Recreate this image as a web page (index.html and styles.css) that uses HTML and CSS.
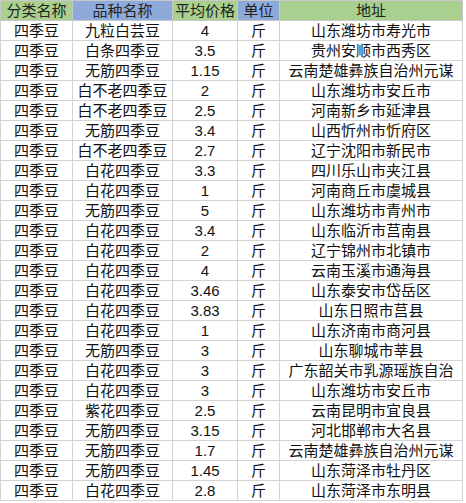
FILE: index.html
```html
<!DOCTYPE html>
<html>
<head>
<meta charset="utf-8">
<link rel="stylesheet" href="styles.css">
</head>
<body>
<table class="sheet">
<colgroup>
<col class="c1"><col class="c2"><col class="c3"><col class="c4"><col class="c5">
</colgroup>
<thead>
<tr><th class="g">分类名称</th><th class="b">品种名称</th><th class="g">平均价格</th><th class="b">单位</th><th class="g">地址</th></tr>
</thead>
<tbody>
<tr><td>四季豆</td><td>九粒白芸豆</td><td class="n">4</td><td>斤</td><td>山东潍坊市寿光市</td></tr>
<tr><td>四季豆</td><td>白条四季豆</td><td class="n">3.5</td><td>斤</td><td>贵州安顺市西秀区</td></tr>
<tr><td>四季豆</td><td>无筋四季豆</td><td class="n">1.15</td><td>斤</td><td>云南楚雄彝族自治州元谋</td></tr>
<tr><td>四季豆</td><td>白不老四季豆</td><td class="n">2</td><td>斤</td><td>山东潍坊市安丘市</td></tr>
<tr><td>四季豆</td><td>白不老四季豆</td><td class="n">2.5</td><td>斤</td><td>河南新乡市延津县</td></tr>
<tr><td>四季豆</td><td>无筋四季豆</td><td class="n">3.4</td><td>斤</td><td>山西忻州市忻府区</td></tr>
<tr><td>四季豆</td><td>白不老四季豆</td><td class="n">2.7</td><td>斤</td><td>辽宁沈阳市新民市</td></tr>
<tr><td>四季豆</td><td>白花四季豆</td><td class="n">3.3</td><td>斤</td><td>四川乐山市夹江县</td></tr>
<tr><td>四季豆</td><td>白花四季豆</td><td class="n">1</td><td>斤</td><td>河南商丘市虞城县</td></tr>
<tr><td>四季豆</td><td>无筋四季豆</td><td class="n">5</td><td>斤</td><td>山东潍坊市青州市</td></tr>
<tr><td>四季豆</td><td>白花四季豆</td><td class="n">3.4</td><td>斤</td><td>山东临沂市莒南县</td></tr>
<tr><td>四季豆</td><td>白花四季豆</td><td class="n">2</td><td>斤</td><td>辽宁锦州市北镇市</td></tr>
<tr><td>四季豆</td><td>白花四季豆</td><td class="n">4</td><td>斤</td><td>云南玉溪市通海县</td></tr>
<tr><td>四季豆</td><td>白花四季豆</td><td class="n">3.46</td><td>斤</td><td>山东泰安市岱岳区</td></tr>
<tr><td>四季豆</td><td>白花四季豆</td><td class="n">3.83</td><td>斤</td><td>山东日照市莒县</td></tr>
<tr><td>四季豆</td><td>白花四季豆</td><td class="n">1</td><td>斤</td><td>山东济南市商河县</td></tr>
<tr><td>四季豆</td><td>无筋四季豆</td><td class="n">3</td><td>斤</td><td>山东聊城市莘县</td></tr>
<tr><td>四季豆</td><td>白花四季豆</td><td class="n">3</td><td>斤</td><td>广东韶关市乳源瑶族自治</td></tr>
<tr><td>四季豆</td><td>白花四季豆</td><td class="n">3</td><td>斤</td><td>山东潍坊市安丘市</td></tr>
<tr><td>四季豆</td><td>紫花四季豆</td><td class="n">2.5</td><td>斤</td><td>云南昆明市宜良县</td></tr>
<tr><td>四季豆</td><td>无筋四季豆</td><td class="n">3.15</td><td>斤</td><td>河北邯郸市大名县</td></tr>
<tr><td>四季豆</td><td>无筋四季豆</td><td class="n">1.7</td><td>斤</td><td>云南楚雄彝族自治州元谋</td></tr>
<tr><td>四季豆</td><td>无筋四季豆</td><td class="n">1.45</td><td>斤</td><td>山东菏泽市牡丹区</td></tr>
<tr><td>四季豆</td><td>白花四季豆</td><td class="n">2.8</td><td>斤</td><td>山东菏泽市东明县</td></tr>
</tbody>
</table>
</body>
</html>
```

FILE: styles.css
```css
html, body {
  margin: 0;
  padding: 0;
  background: #ffffff;
}
.sheet {
  border-collapse: collapse;
  table-layout: fixed;
  width: 462px;
  font-family: "Liberation Sans", "Noto Sans CJK SC", sans-serif;
  font-size: 15px;
  color: #111111;
}
.c1 { width: 72px; }
.c2 { width: 100px; }
.c3 { width: 65px; }
.c4 { width: 42px; }
.c5 { width: 183px; }
.sheet th,
.sheet td {
  height: 19px;
  padding: 0;
  line-height: 19px;
  text-align: center;
  white-space: nowrap;
  overflow: hidden;
  border: 1px solid #d4d4d4;
  font-weight: normal;
}
.sheet th {
  color: #222222;
  border-color: #c8c8c8;
}
.sheet th.g { background: #a9d08e; }
.sheet th.b { background: #8eaadb; }
```
